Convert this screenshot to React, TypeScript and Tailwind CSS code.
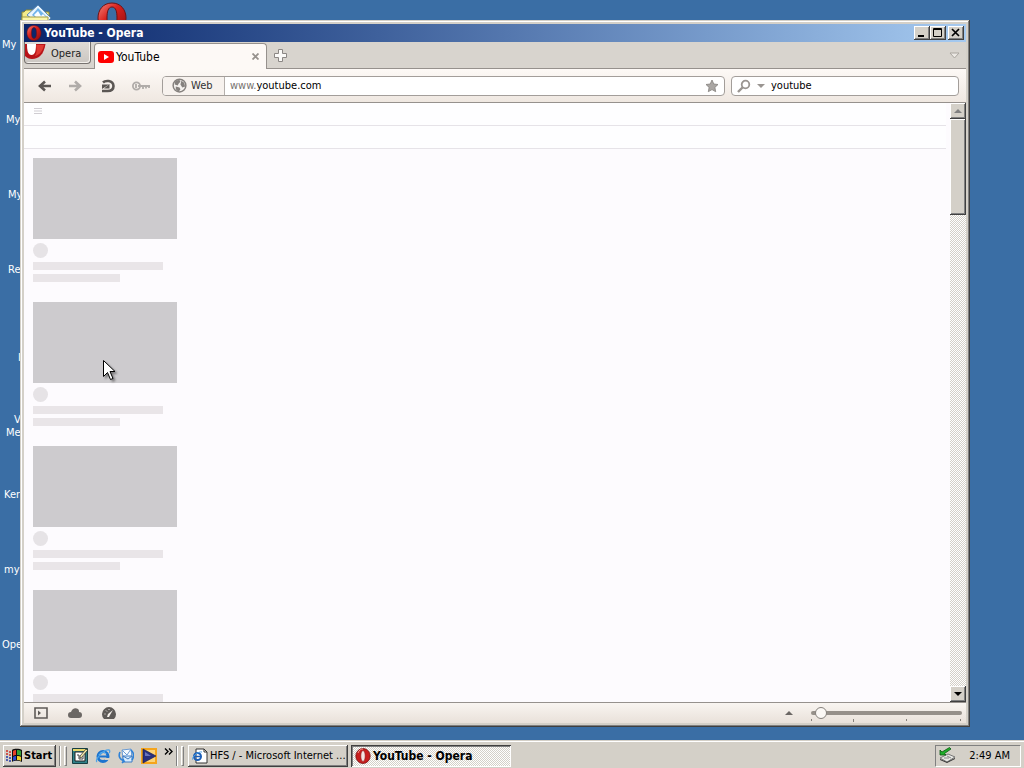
import { useState } from "react"
import type { ReactNode } from "react"

const DESKTOP_LABELS = [
  { text: "My", pos: "left-0.5 top-[38px]" },
  { text: "My", pos: "left-1.5 top-[113px]" },
  { text: "My", pos: "left-2 top-[188px]" },
  { text: "Re", pos: "left-2 top-[263px]" },
  { text: "I", pos: "left-[18px] top-[351px]" },
  { text: "V", pos: "left-3.5 top-[413px]" },
  { text: "Me", pos: "left-1.5 top-[426px]" },
  { text: "Ker", pos: "left-1 top-[488px]" },
  { text: "myp", pos: "left-1 top-[563px]" },
  { text: "Ope", pos: "left-0.5 top-[638px]" },
]

const RAISED =
  "bg-[#d4d0c8] shadow-[inset_-1px_-1px_0_#404040,inset_1px_1px_0_#ffffff,inset_-2px_-2px_0_#808080]"
const DITHER =
  "bg-[repeating-conic-gradient(#ffffff_0_25%,#d4d0c8_0_50%)] bg-[length:2px_2px]"

function OperaIcon({ className }: { className: string }) {
  return (
    <svg viewBox="0 0 32 32" className={className} aria-hidden="true">
      <defs>
        <linearGradient id="operaRed" x1="0" y1="0" x2="1" y2="1">
          <stop offset="0" stopColor="#f4857c" />
          <stop offset="0.4" stopColor="#d9231f" />
          <stop offset="1" stopColor="#8c0a0c" />
        </linearGradient>
      </defs>
      <path
        fillRule="evenodd"
        fill="url(#operaRed)"
        stroke="#6d1114"
        d="M16 1C7 1 2 8 2 16s5 15 14 15 14-7 14-15S25 1 16 1Zm0 4c4 0 5 5 5 11s-1 11-5 11-5-5-5-11 1-11 5-11Z"
      />
    </svg>
  )
}

function OperaBadge() {
  return (
    <svg viewBox="0 0 16 16" className="h-4 w-4 shrink-0" aria-hidden="true">
      <ellipse cx="8" cy="8" rx="7.200" ry="7.500" fill="#c81e1e" stroke="#7a1012" strokeWidth=".8" />
      <path d="M3 5c1-3 3-4 5-4" fill="none" stroke="#f29a92" />
      <ellipse cx="8" cy="8" rx="2.200" ry="5.500" fill="#f4e4e2" stroke="#8c1013" strokeWidth=".6" />
    </svg>
  )
}

function FolderIcon() {
  return (
    <svg viewBox="0 0 32 32" className="h-8 w-8" aria-hidden="true">
      <path d="M1 8h2l2-2h7l2 2h14v20H1Z" fill="#f3ec8c" stroke="#8d8732" />
      <path d="m17 1 13 13-9 9L6 11Z" fill="#e9f5ff" stroke="#5b88b5" />
      <path d="m17 4 9 9-6 5-9-7Z" fill="#6fb3ea" />
      <path d="m13 11 4-4 3 5 2-2 3 3-5 5Z" fill="#f8fcff" />
      <path d="M1 13h26v16H1Z" fill="#fbf6a8" stroke="#a39c45" />
    </svg>
  )
}

function InternetIcon() {
  return (
    <svg viewBox="0 0 16 16" className="h-4 w-4" aria-hidden="true">
      <circle cx="8" cy="8.500" r="5" fill="none" stroke="#1c74cf" strokeWidth="3" />
      <path d="M4 8.500h9" stroke="#1c74cf" strokeWidth="2" />
      <path d="M10 10h5v2h-5Z" fill="#d4d0c8" />
      <path d="M4 7c1-3 6-4 7-1" fill="none" stroke="#72c4fa" />
      <path d="M2 14C-1 12 9 1 14 2c1 0 1 2 0 3" fill="none" stroke="#4ba2e8" strokeWidth="1.300" />
    </svg>
  )
}

function DesktopPadIcon() {
  return (
    <svg viewBox="0 0 16 16" className="h-4 w-4" aria-hidden="true">
      <path d="M.5.5h15v15H.5Z" fill="#2f8088" stroke="#173f43" />
      <path d="M1 1h14v2H1Z" fill="#e4d66c" />
      <path d="M3 4h10v9H3Z" fill="#fff" stroke="#222" />
      <path d="M5 7h2v4h4V8" fill="none" stroke="#444" />
      <path d="m8 8 6-7 1.500 1.500-6 7L8 10Z" fill="#f4ebaa" stroke="#222" strokeWidth=".7" />
    </svg>
  )
}

function OutlookIcon() {
  return (
    <svg viewBox="0 0 16 16" className="h-4 w-4" aria-hidden="true">
      <path d="m4 2 9-1 1 9-9 1Z" fill="#f4faff" stroke="#6a9bd4" />
      <path d="m4 2 5 5 4-6" fill="none" stroke="#6a9bd4" />
      <path d="M5 8h9v6H5Z" fill="#d6ecff" stroke="#3f7cc4" />
      <path d="m5 8 5 3 4-3" fill="none" stroke="#3f7cc4" />
      <path d="M2 4c-2 4 0 8 4 9l-1-2m1 2-2 2M14 12c2-3 2-7-1-10" fill="none" stroke="#2e82d8" strokeWidth="1.600" />
    </svg>
  )
}

function MediaIcon() {
  return (
    <svg viewBox="0 0 16 16" className="h-4 w-4" aria-hidden="true">
      <path d="M0 0h16v16H0Z" fill="#f5a51c" />
      <path d="M2 2h12v12H2Z" fill="#fbd37a" />
      <path d="m2 1 13 7-13 7Z" fill="#29307e" stroke="#161a4a" strokeWidth=".6" />
      <path d="m4 4 6 4H4Z" fill="#6a74bc" />
    </svg>
  )
}

function PageIcon() {
  return (
    <svg viewBox="0 0 16 16" className="h-4 w-4 shrink-0" aria-hidden="true">
      <path d="M4 1h8l3 3v11H4Z" fill="#fff" stroke="#333" />
      <path d="M12 1v3h3" fill="none" stroke="#333" />
      <circle cx="5.500" cy="8.500" r="3.500" fill="none" stroke="#1c5fb8" strokeWidth="2" />
      <path d="M3 8.500h6" stroke="#1c5fb8" strokeWidth="1.500" />
      <path d="M0 12C0 9 6 3 10 4" fill="none" stroke="#4ba2e8" />
    </svg>
  )
}

function WindowsIcon() {
  return (
    <svg viewBox="0 0 17 16" className="h-4 w-[17px]" aria-hidden="true">
      <path d="M6 2c3-2 8-1 10 0v12c-2-1-7-2-10 0Z" fill="#111" />
      <path d="M7 3c1-1 2-1 3-1v5c-1 0-2 0-3 1Z" fill="#e8402a" />
      <path d="M11 2c2 0 3 0 4 1v5c-1-1-2-1-4-1Z" fill="#35a338" />
      <path d="M7 9c1-1 2-1 3-1v4c-1 0-2 0-3 1Z" fill="#2b49d0" />
      <path d="M11 8c2 0 3 0 4 1v4c-1-1-2-1-4-1Z" fill="#f1cf29" />
      <path d="M0 3h2M3 4h2M0 6h2M3 7h2" stroke="#d02c24" strokeWidth="1.600" />
      <path d="M0 9h2M3 10h2M0 12h2M3 13h2" stroke="#2437a8" strokeWidth="1.600" />
    </svg>
  )
}

function TrayIcon() {
  return (
    <svg viewBox="0 0 17 17" className="h-[17px] w-[17px]" aria-hidden="true">
      <path d="m1 11 8-4 7 3-8 5Z" fill="#e8e8e4" stroke="#777" />
      <path d="m1 12 7 3 8-4v1l-8 4-7-3Z" fill="#333" />
      <path d="M5 11h5M8 9l4 2" stroke="#888" />
      <path d="M1 3v5h6L5.500 6.500 12 2l-1.500-1.500L3 5Z" fill="#1fb02a" stroke="#0b5711" strokeWidth=".8" />
    </svg>
  )
}

function CaptionButton({ label, children }: { label: string; children: ReactNode }) {
  return (
    <button aria-label={label} className={`h-3.5 w-4 ${RAISED}`}>
      <svg viewBox="0 0 16 14" className="h-3.5 w-4" fill="none" stroke="#000">
        {children}
      </svg>
    </button>
  )
}

function TitleBar() {
  return (
    <div className="flex h-[18px] shrink-0 items-center bg-linear-to-r from-[#0a246a] to-[#a6caf0] px-0.5">
      <OperaIcon className="h-4 w-4" />
      <h1 className="ml-0.5 flex-1 text-xs font-bold text-white">YouTube - Opera</h1>
      <CaptionButton label="Minimize">
        <path d="M4 10h6" strokeWidth="2" />
      </CaptionButton>
      <CaptionButton label="Maximize">
        <path d="M3.500 2.500h8v8h-8ZM3 3.500h9" />
      </CaptionButton>
      <div className="w-0.5" />
      <CaptionButton label="Close">
        <path d="m4 3 7 7m0-7-7 7" strokeWidth="1.700" />
      </CaptionButton>
    </div>
  )
}

function TabStrip() {
  return (
    <div className="flex h-[27px] shrink-0 border-b border-[#96918d] bg-[#d8d4ce]">
      <button className="flex h-[22px] w-[67px] items-start overflow-hidden rounded-b border border-t-0 border-[#777370] bg-linear-to-b from-[#dedad5] to-[#cbc7c2] shadow-[inset_-1px_-1px_0_#f3f0ec]">
        <svg viewBox="0 0 21 18" className="h-[18px] w-[21px]" aria-hidden="true">
          <path d="M0 2h20.500C19 12 14 17 7 17c-3 0-5-1-7-3Z" fill="#b81419" />
          <path d="M11 3h8c-1 5-4 10-9 11 2-3 2-7 1-11Z" fill="#df3a33" />
          <path d="M2 2h9c0 7-1 11-4.500 11S2 9 2 2Z" fill="#fff" />
        </svg>
        <span className="ml-[5px] leading-[24px] text-[#222]">Opera</span>
      </button>
      <div className="-mb-px ml-[3px] mt-px flex h-[26px] w-[173px] items-center rounded-t border border-b-0 border-[#96918d] bg-[#fdf9f6] px-[3px]">
        <svg viewBox="0 0 16 12" className="h-3 w-4" aria-hidden="true">
          <rect width="16" height="12" rx="3" fill="#f00" />
          <path d="m6 3 5 3-5 3Z" fill="#fff" />
        </svg>
        <span className="ml-0.5 flex-1 text-xs">YouTube</span>
        <button aria-label="Close tab" className="p-1">
          <svg viewBox="0 0 7 7" className="h-[7px] w-[7px]" stroke="#96918d" strokeWidth="1.800">
            <path d="m.5.5 6 6m0-6-6 6" />
          </svg>
        </button>
      </div>
      <button aria-label="New tab" className="ml-1.5 self-center">
        <svg viewBox="0 0 15 15" className="h-[15px] w-[15px]" fill="#fbfaf8" stroke="#8b8784">
          <path d="M5.500 1.500h4v4h4v4h-4v4h-4v-4h-4v-4h4Z" />
        </svg>
      </button>
      <button aria-label="Closed tabs" className="ml-auto mr-1.5 self-center">
        <svg viewBox="0 0 11 7" className="h-[7px] w-[11px]" fill="#ece9e4" stroke="#aaa69f">
          <path d="M1 1h9L5.500 6Z" />
        </svg>
      </button>
    </div>
  )
}

function Toolbar() {
  const [search, setSearch] = useState("youtube")
  const [url, setUrl] = useState("youtube.com")

  return (
    <div className="flex h-[34px] shrink-0 items-center border-b border-[#96918d] bg-linear-to-b from-[#fdf9f6] to-[#efe8e1] pl-3 pr-[7px]">
      <div className="flex w-[126px] items-center gap-4">
        <button aria-label="Back">
          <svg viewBox="0 0 16 16" className="h-4 w-4" fill="none" stroke="#5b5754" strokeWidth="2.600">
            <path d="M15 8H4m5-4.500L4 8l5 4.500" />
          </svg>
        </button>
        <button aria-label="Forward">
          <svg viewBox="0 0 16 16" className="h-4 w-4" fill="none" stroke="#b0aca9" strokeWidth="2.600">
            <path d="M1 8h11M7 3.500 12 8l-5 4.500" />
          </svg>
        </button>
        <button aria-label="Reload">
          <svg viewBox="0 0 16 16" className="h-4 w-4" fill="none" stroke="#5b5754" strokeWidth="2.600">
            <path d="M3 4.500C5 2.500 13 1.500 13.500 8c0 4-3 5-6 5H2" />
            <path d="M2 11V6.500h7Z" fill="#5b5754" stroke="none" />
            <path d="M9.500 6v4.500H4Z" fill="#5b5754" stroke="none" />
          </svg>
        </button>
        <button aria-label="Wand">
          <svg viewBox="0 0 18 12" className="h-3 w-[18px]" fill="none" stroke="#b0aca9" strokeWidth="1.800">
            <circle cx="4.500" cy="6" r="3.600" />
            <path d="M6 6h12M11 6v3M14 6v2.500M17 6v2M4 4v4" />
          </svg>
        </button>
      </div>
      <div className="flex h-5 flex-1 items-stretch overflow-hidden rounded border border-[#a39e9a] bg-white">
        <button className="flex w-[62px] items-center gap-1 border-r border-[#b5b0ac] bg-[#f7f2ee] pl-[9px] text-[#333]">
          <svg viewBox="0 0 16 16" className="h-[15px] w-[15px]" aria-hidden="true">
            <circle cx="8" cy="8" r="6.800" fill="#f4f1ee" stroke="#85817e" strokeWidth="1.600" />
            <path d="M3 4c2-2 4-2 5-2l1 2-2 2-1 2-3-1ZM10 3l3 2 1 4-3 1-2-3ZM4 9l4 1 1 2-2 3-3-3Z" fill="#85817e" />
          </svg>
          <span>Web</span>
        </button>
        <label htmlFor="url" className="flex items-center pl-[5px] text-[#77736f]">
          www.
        </label>
        <input
          id="url"
          value={url}
          onChange={(e) => setUrl(e.target.value)}
          className="min-w-0 flex-1 bg-transparent text-black outline-none"
        />
        <button aria-label="Bookmark" className="px-[5px]">
          <svg viewBox="0 0 14 14" className="h-3.5 w-3.5" fill="#aaa6a3" stroke="#85817e" strokeWidth=".8">
            <path d="m7 1 1.800 4 4.200.5-3.100 2.900.8 4.300L7 10.600l-3.700 2.100.8-4.300L1 5.500 5.200 5Z" />
          </svg>
        </button>
      </div>
      <div className="ml-1.5 flex h-5 w-[228px] items-center rounded border border-[#a39e9a] bg-white pl-[5px]">
        <label htmlFor="search" aria-label="Search" className="flex items-center gap-1.5">
          <svg viewBox="0 0 14 14" className="h-3.5 w-3.5" fill="none" stroke="#9a9591" strokeWidth="1.800">
            <circle cx="8.500" cy="5.500" r="3.800" />
            <path d="m6 8-5 5" strokeWidth="2.400" />
          </svg>
          <svg viewBox="0 0 8 4" className="h-1 w-2" fill="#9a9591">
            <path d="M0 0h8L4 4Z" />
          </svg>
        </label>
        <input
          id="search"
          value={search}
          onChange={(e) => setSearch(e.target.value)}
          className="ml-1.5 min-w-0 flex-1 bg-transparent text-black outline-none"
        />
      </div>
    </div>
  )
}

function SkeletonCard() {
  return (
    <div className="flex w-36 flex-col gap-1">
      <div className="h-[81px] bg-[#cdcbce]" />
      <div className="h-[15px] w-[15px] rounded-full bg-[#e6e3e6]" />
      <div className="h-2 w-[130px] bg-[#e9e5e8]" />
      <div className="h-2 w-[87px] bg-[#e9e5e8]" />
    </div>
  )
}

function ScrollBar() {
  return (
    <div className={`flex w-4 shrink-0 flex-col ${DITHER}`}>
      <button aria-label="Scroll up" className={`flex h-4 items-center justify-center ${RAISED}`}>
        <svg viewBox="0 0 8 4" className="h-1 w-2" fill="#808080">
          <path d="M0 4h8L4 0Z" />
        </svg>
      </button>
      <div className={`h-24 ${RAISED}`} />
      <button
        aria-label="Scroll down"
        className={`mt-auto flex h-4 items-center justify-center ${RAISED}`}
      >
        <svg viewBox="0 0 8 4" className="h-1 w-2" fill="#000">
          <path d="M0 0h8L4 4Z" />
        </svg>
      </button>
    </div>
  )
}

function Page() {
  return (
    <div className="flex min-h-0 flex-1">
      <main className="flex-1 overflow-hidden bg-[#fdfbfe]">
        <header className="mr-1 bg-[#fefeff]">
          <div className="h-[23px] border-b border-[#e6e3e8] pl-2.5 pt-[5px]">
            <button aria-label="Menu" className="block">
              <svg viewBox="0 0 8 7" className="h-[7px] w-2" stroke="#d0cdd2">
                <path d="M0 .5h8M0 3h8M0 5.500h8" />
              </svg>
            </button>
          </div>
          <div className="h-[23px] border-b border-[#e6e3e8]" />
        </header>
        <div className="flex flex-col gap-5 px-[9px] pt-[9px]">
          <SkeletonCard />
          <SkeletonCard />
          <SkeletonCard />
          <SkeletonCard />
        </div>
      </main>
      <ScrollBar />
    </div>
  )
}

function StatusBar() {
  const [zoom, setZoom] = useState(3)

  return (
    <div className="flex h-[21px] shrink-0 items-center border-t border-[#96918d] bg-linear-to-b from-[#f9f5f1] to-[#e9e1da] pl-2.5 pr-1">
      <div className="flex items-center gap-5">
        <button aria-label="Panels">
          <svg viewBox="0 0 14 12" className="h-3 w-3.5" fill="none" stroke="#5f5b58" strokeWidth="1.600">
            <path d="M1 1h12v10H1Z" />
            <path d="m4 3.500 3 2.500-3 2.500Z" fill="#5f5b58" stroke="none" />
          </svg>
        </button>
        <button aria-label="Link">
          <svg viewBox="0 0 14 10" className="h-2.5 w-3.5" fill="#6b6764">
            <path d="M3 10a3 3 0 0 1 0-6c1-3 4-5 7-3 1 1 1 2 1 3a3 3 0 0 1 0 6Z" />
          </svg>
        </button>
        <button aria-label="Turbo">
          <svg viewBox="0 0 14 12" className="h-3 w-3.5">
            <path d="M2 12a7 7 0 1 1 10 0Z" fill="#5f5b58" />
            <path d="m5 10 1-3 5-4-3 5-1 2Z" fill="#f5f0eb" />
            <path d="M2.500 7h1M4 3.500l1 1M7 2v1" stroke="#f5f0eb" />
          </svg>
        </button>
      </div>
      <button aria-label="View" className="ml-auto mr-[18px]">
        <svg viewBox="0 0 8 4" className="h-1 w-2" fill="#6b6764">
          <path d="M0 4h8L4 0Z" />
        </svg>
      </button>
      <div className="flex w-[151px] flex-col pt-0.5">
        <input
          type="range"
          aria-label="Zoom"
          value={zoom}
          onChange={(e) => setZoom(Number(e.target.value))}
          className="h-3 w-full appearance-none bg-transparent [&::-webkit-slider-runnable-track]:h-1 [&::-webkit-slider-runnable-track]:rounded-full [&::-webkit-slider-runnable-track]:bg-[#96908a] [&::-webkit-slider-thumb]:-mt-1 [&::-webkit-slider-thumb]:h-3 [&::-webkit-slider-thumb]:w-3 [&::-webkit-slider-thumb]:appearance-none [&::-webkit-slider-thumb]:rounded-full [&::-webkit-slider-thumb]:border [&::-webkit-slider-thumb]:border-[#85807b] [&::-webkit-slider-thumb]:bg-[#fbf8f5]"
        />
        <svg viewBox="0 0 151 3" className="h-[3px] w-full" stroke="#85807b">
          <path d="M.5 0v2M42.500 0v3M95.500 0v2M149.500 0v2" />
        </svg>
      </div>
    </div>
  )
}

function Grip() {
  return (
    <div className="flex h-5 gap-[3px]">
      <div className="w-0.5 border-l border-r border-l-[#808080] border-r-white" />
      <div className="w-[3px] border border-b-[#808080] border-l-white border-r-[#808080] border-t-white" />
    </div>
  )
}

function Taskbar() {
  return (
    <footer className="flex h-7 shrink-0 items-center border-t border-[#d4d0c8] bg-[#d4d0c8] px-[3px] pt-0.5 shadow-[inset_0_1px_0_#ffffff]">
      <button className={`flex h-[22px] w-[53px] items-center gap-px pl-[3px] font-bold ${RAISED}`}>
        <WindowsIcon />
        Start
      </button>
      <div className="ml-[3px]">
        <Grip />
      </div>
      <nav className="ml-[5px] flex items-center gap-[7px]">
        <button aria-label="Show desktop">
          <DesktopPadIcon />
        </button>
        <button aria-label="Internet Explorer">
          <InternetIcon />
        </button>
        <button aria-label="Outlook Express">
          <OutlookIcon />
        </button>
        <button aria-label="Media Player">
          <MediaIcon />
        </button>
        <button aria-label="More" className="self-start">
          <svg viewBox="0 0 9 7" className="h-[7px] w-[9px]" fill="none" stroke="#000" strokeWidth="1.400">
            <path d="m1 .5 3 3-3 3M5 .5l3 3-3 3" />
          </svg>
        </button>
      </nav>
      <div className="ml-[3px]">
        <Grip />
      </div>
      <button className={`ml-1 flex h-[22px] w-40 items-center gap-0.5 pl-1 ${RAISED}`}>
        <PageIcon />
        <span className="whitespace-nowrap">HFS / - Microsoft Internet ...</span>
      </button>
      <button
        className={`ml-[3px] flex h-[22px] w-40 items-center gap-0.5 pl-1 text-xs font-bold shadow-[inset_1px_1px_0_#404040,inset_-1px_-1px_0_#ffffff,inset_2px_2px_0_#808080] ${DITHER}`}
      >
        <OperaBadge />
        <span>YouTube - Opera</span>
      </button>
      <div className="ml-auto flex h-[22px] w-[86px] items-center justify-between border border-b-white border-l-[#808080] border-r-white border-t-[#808080] pl-[3px] pr-2.5">
        <TrayIcon />
        <time>2:49 AM</time>
      </div>
    </footer>
  )
}

export default function App() {
  return (
    <div className="flex h-screen flex-col overflow-hidden bg-[#3a6ea5] font-['DejaVu_Sans_Condensed','DejaVu_Sans',sans-serif] text-[11px] leading-[14px] text-black">
      <div className="relative flex-1">
        {DESKTOP_LABELS.map((label) => (
          <span key={label.pos} className={`absolute text-white ${label.pos}`}>
            {label.text}
          </span>
        ))}
        <div className="absolute left-[21px] top-1">
          <FolderIcon />
        </div>
        <div className="absolute left-24 top-0.5">
          <OperaIcon className="h-8 w-8" />
        </div>

        <section className="absolute bottom-[13px] left-5 right-[54px] top-5 flex flex-col bg-[#d4d0c8] p-1 shadow-[inset_-1px_-1px_0_#404040,inset_1px_1px_0_#d4d0c8,inset_-2px_-2px_0_#808080,inset_2px_2px_0_#ffffff]">
          <TitleBar />
          <TabStrip />
          <Toolbar />
          <Page />
          <StatusBar />
        </section>

        {/* Pointer */}
        <svg
          viewBox="0 0 14 22"
          className="absolute left-[102px] top-[359px] h-[22px] w-3.5 drop-shadow-[2px_2px_1px_#00000066]"
          aria-hidden="true"
        >
          <path
            d="M1.500 1.500v16l4-4 3 7 2.500-1-3-7h5Z"
            fill="#fff"
            stroke="#000"
          />
        </svg>
      </div>
      <Taskbar />
    </div>
  )
}
